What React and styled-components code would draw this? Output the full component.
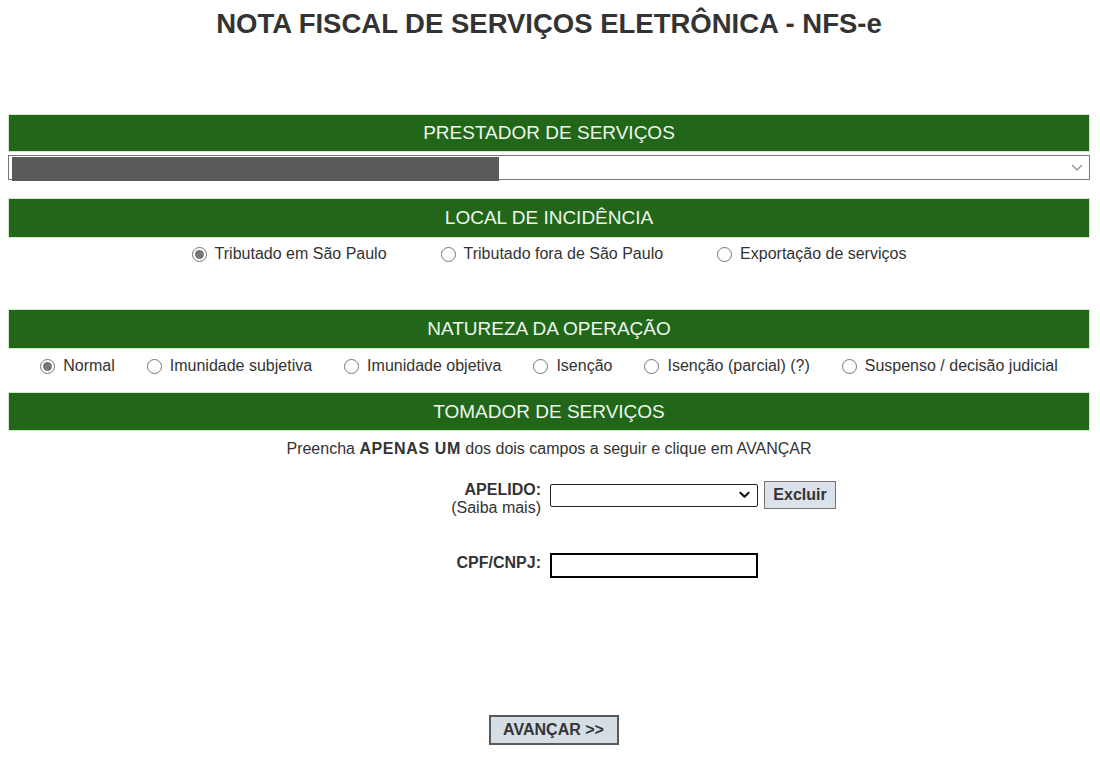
import React from "react";
import styled, { createGlobalStyle } from "styled-components";

const Global = createGlobalStyle`
  html, body { margin: 0; padding: 0; background: #fff; }
  body { padding: 8px; font-family: "Liberation Sans", Arial, sans-serif; color: #333; }
`;

const Page = styled.div`
  width: 1082px;
  display: flex;
  flex-direction: column;
`;

const Title = styled.h1`
  margin: 2px 0 0;
  height: 28px;
  text-align: center;
  font-size: 27.5px;
  line-height: 28px;
  font-weight: bold;
  color: #333;
`;

const Bar = styled.div`
  margin-top: ${(p) => p.$top}px;
  height: ${(p) => p.$h || 38}px;
  background: #216619;
  border: 1px solid #cfe9c8;
  box-sizing: border-box;
  display: flex;
  align-items: center;
  justify-content: center;
  color: #eef7ec;
  font-size: 19px;
`;

const SelectWrap = styled.div`
  position: relative;
  margin-top: 3px;
  height: 25px;
  border: 1px solid #767676;
  box-sizing: border-box;
  background: #fff;
  display: flex;
  align-items: center;
  justify-content: flex-end;
  padding-right: 6px;
`;

const Redacted = styled.div`
  position: absolute;
  left: 3px;
  top: 1px;
  width: 487px;
  height: 24px;
  background: #5a5a5a;
`;

const RadioRow = styled.div`
  margin-top: ${(p) => p.$top}px;
  height: 20px;
  display: flex;
  justify-content: center;
  align-items: center;
  gap: ${(p) => p.$gap}px;
  font-size: 16px;
  color: #333;
`;

const RadioItem = styled.label`
  display: flex;
  align-items: center;
  gap: 8px;
  white-space: nowrap;
`;

const RadioDot = styled.span`
  width: 15px;
  height: 15px;
  border-radius: 50%;
  border: 1px solid #767676;
  box-sizing: border-box;
  background: #fff;
  display: flex;
  align-items: center;
  justify-content: center;
  &::after {
    content: "";
    width: 9px;
    height: 9px;
    border-radius: 50%;
    background: ${(p) => (p.$checked ? "#777" : "transparent")};
  }
`;

const Instr = styled.div`
  margin-top: 9px;
  text-align: center;
  font-size: 16px;
  line-height: 18px;
  color: #333;
  b { letter-spacing: 0.6px; }
`;

const FormRow = styled.div`
  margin-top: ${(p) => p.$top}px;
  display: grid;
  grid-template-columns: 533px auto;
  column-gap: 9px;
  align-items: start;
`;

const Label = styled.div`
  text-align: right;
  font-size: 16px;
  line-height: 18px;
  color: #333;
  padding-top: ${(p) => p.$pt || 0}px;
  b { font-weight: bold; }
`;

const Fields = styled.div`
  display: flex;
  align-items: center;
  gap: 6px;
`;

const FakeSelect = styled.div`
  width: 208px;
  height: 23px;
  box-sizing: border-box;
  border: 1px solid #222;
  border-radius: 2px;
  background: #fff;
  display: flex;
  align-items: center;
  justify-content: flex-end;
  padding-right: 7px;
`;

const SmallButton = styled.button`
  width: 72px;
  height: 28px;
  box-sizing: border-box;
  border: 1px solid #767676;
  background: #dbe2e9;
  font-family: "Liberation Sans", Arial, sans-serif;
  font-weight: bold;
  font-size: 16px;
  color: #333;
  padding: 0;
`;

const TextInput = styled.div`
  width: 208px;
  height: 25px;
  box-sizing: border-box;
  border: 2px solid #000;
  background: #fff;
`;

const SubmitWrap = styled.div`
  margin-top: 137px;
  display: flex;
  justify-content: center;
  padding-left: 9px;
`;

const Submit = styled.button`
  width: 130px;
  height: 30px;
  box-sizing: border-box;
  border: 2px solid #5a5a5a;
  background: #d5dde5;
  font-family: "Liberation Sans", Arial, sans-serif;
  font-weight: bold;
  font-size: 16px;
  color: #333;
  padding: 0;
`;

const Chevron = ({ color = "#999", w = 12, sw = 1.5 }) => (
  <svg width={w} height="8" viewBox="0 0 12 8" fill="none">
    <path d="M1.5 1.5 L6 6 L10.5 1.5" stroke={color} strokeWidth={sw} strokeLinecap="round" strokeLinejoin="round" />
  </svg>
);

const Radio = ({ checked, children }) => (
  <RadioItem>
    <RadioDot $checked={checked} />
    {children}
  </RadioItem>
);

export default function App() {
  return (
    <>
      <Global />
      <Page>
        <Title>NOTA FISCAL DE SERVIÇOS ELETRÔNICA - NFS-e</Title>
        <Bar $top={76} $h={38}>PRESTADOR DE SERVIÇOS</Bar>
        <SelectWrap>
          <Redacted />
          <Chevron />
        </SelectWrap>
        <Bar $top={18} $h={40}>LOCAL DE INCIDÊNCIA</Bar>
        <RadioRow $top={6} $gap={54}>
          <Radio checked>Tributado em São Paulo</Radio>
          <Radio>Tributado fora de São Paulo</Radio>
          <Radio>Exportação de serviços</Radio>
        </RadioRow>
        <Bar $top={45} $h={40}>NATUREZA DA OPERAÇÃO</Bar>
        <RadioRow $top={7} $gap={32}>
          <Radio checked>Normal</Radio>
          <Radio>Imunidade subjetiva</Radio>
          <Radio>Imunidade objetiva</Radio>
          <Radio>Isenção</Radio>
          <Radio>Isenção (parcial) (?)</Radio>
          <Radio>Suspenso / decisão judicial</Radio>
        </RadioRow>
        <Bar $top={16} $h={39}>TOMADOR DE SERVIÇOS</Bar>
        <Instr>
          Preencha <b>APENAS UM</b> dos dois campos a seguir e clique em AVANÇAR
        </Instr>
        <FormRow $top={23}>
          <Label>
            <b>APELIDO:</b>
            <br />
            (Saiba mais)
          </Label>
          <Fields>
            <FakeSelect>
              <Chevron color="#111" w={11} sw={2.2} />
            </FakeSelect>
            <SmallButton>Excluir</SmallButton>
          </Fields>
        </FormRow>
        <FormRow $top={36}>
          <Label $pt={1}>
            <b>CPF/CNPJ:</b>
          </Label>
          <Fields>
            <TextInput />
          </Fields>
        </FormRow>
        <SubmitWrap>
          <Submit>AVANÇAR &gt;&gt;</Submit>
        </SubmitWrap>
      </Page>
    </>
  );
}
